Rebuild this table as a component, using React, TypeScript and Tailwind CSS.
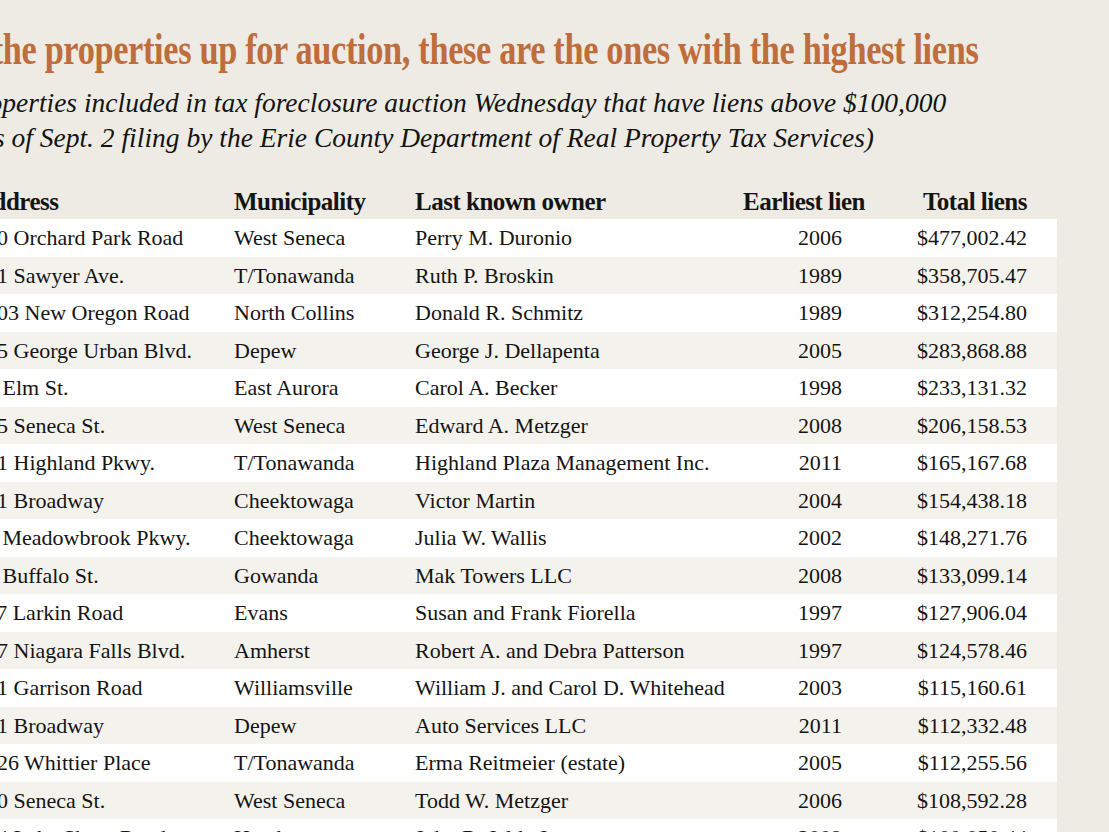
const rows = [
  ['940 Orchard Park Road', 'West Seneca', 'Perry M. Duronio', '2006', '$477,002.42'],
  ['131 Sawyer Ave.', 'T/Tonawanda', 'Ruth P. Broskin', '1989', '$358,705.47'],
  ['3403 New Oregon Road', 'North Collins', 'Donald R. Schmitz', '1989', '$312,254.80'],
  ['445 George Urban Blvd.', 'Depew', 'George J. Dellapenta', '2005', '$283,868.88'],
  ['36 Elm St.', 'East Aurora', 'Carol A. Becker', '1998', '$233,131.32'],
  ['415 Seneca St.', 'West Seneca', 'Edward A. Metzger', '2008', '$206,158.53'],
  ['171 Highland Pkwy.', 'T/Tonawanda', 'Highland Plaza Management Inc.', '2011', '$165,167.68'],
  ['871 Broadway', 'Cheektowaga', 'Victor Martin', '2004', '$154,438.18'],
  ['90 Meadowbrook Pkwy.', 'Cheektowaga', 'Julia W. Wallis', '2002', '$148,271.76'],
  ['54 Buffalo St.', 'Gowanda', 'Mak Towers LLC', '2008', '$133,099.14'],
  ['117 Larkin Road', 'Evans', 'Susan and Frank Fiorella', '1997', '$127,906.04'],
  ['437 Niagara Falls Blvd.', 'Amherst', 'Robert A. and Debra Patterson', '1997', '$124,578.46'],
  ['261 Garrison Road', 'Williamsville', 'William J. and Carol D. Whitehead', '2003', '$115,160.61'],
  ['781 Broadway', 'Depew', 'Auto Services LLC', '2011', '$112,332.48'],
  ['1026 Whittier Place', 'T/Tonawanda', 'Erma Reitmeier (estate)', '2005', '$112,255.56'],
  ['440 Seneca St.', 'West Seneca', 'Todd W. Metzger', '2006', '$108,592.28'],
  ['574 Lake Shore Road', 'Hamburg', 'John R. Jelde Jr.', '2009', '$100,050.44'],
]

const serif = "font-['Liberation_Serif',serif]"

export default function App() {
  return (
    <div className={`w-[1109px] h-[832px] overflow-hidden bg-[#edebe3] text-[#141414] ${serif}`}>
      <div className="pt-[26px] -ml-[54px] whitespace-nowrap">
        <h1 className="inline-block origin-left scale-x-[0.78] text-[44px] leading-[48px] font-bold tracking-[-0.01em] text-[#bf6d3c]">
          Of the properties up for auction, these are the ones with the highest liens
        </h1>
      </div>

      <div className="mt-[11px] text-[27.5px] leading-[35px] italic whitespace-nowrap">
        <p className="-ml-[38px]">Properties included in tax foreclosure auction Wednesday that have liens above $100,000</p>
        <p className="-ml-[29px]">(as of Sept. 2 filing by the Erie County Department of Real Property Tax Services)</p>
      </div>

      <div className="mt-[28px] -ml-[25px] w-[1082px]">
        <div className="grid grid-cols-[259px_181px_328px_142px_172px] h-[36px] items-center pb-[2px] text-[25px] font-bold tracking-[-0.02em] whitespace-nowrap">
          <div>Address</div>
          <div>Municipality</div>
          <div>Last known owner</div>
          <div>Earliest lien</div>
          <div className="text-right pr-[30px]">Total liens</div>
        </div>
        {rows.map((r, i) => (
          <div
            key={i}
            className={`grid grid-cols-[259px_181px_328px_142px_172px] h-[37.5px] items-center text-[22px] whitespace-nowrap ${i % 2 === 0 ? 'bg-white' : 'bg-[#f3f2ec]'}`}
          >
            <div>{r[0]}</div>
            <div>{r[1]}</div>
            <div>{r[2]}</div>
            <div className="text-right pr-[43px]">{r[3]}</div>
            <div className="text-right pr-[30px]">{r[4]}</div>
          </div>
        ))}
      </div>
    </div>
  )
}
